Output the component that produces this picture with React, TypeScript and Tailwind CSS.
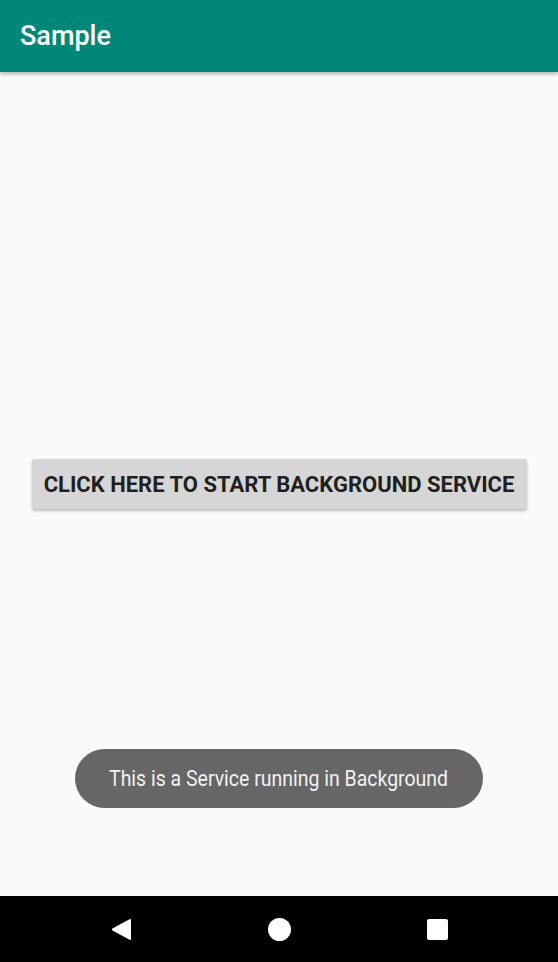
import React from "react";

export default function App() {
  return (
    <div className="flex flex-col w-[558px] h-[962px] bg-[#fafafa] font-['Roboto',sans-serif] overflow-hidden">
      {/* App bar */}
      <div className="h-[72px] shrink-0 bg-[#00877a] flex items-center px-5 shadow-[0_2px_4px_rgba(0,0,0,0.3)] z-10">
        <h1 className="text-[27px] font-medium text-white">Sample</h1>
      </div>

      {/* Content */}
      <div className="relative flex-1 flex items-center justify-center">
        <button className="h-[50px] w-[495px] bg-[#d6d6d6] rounded-[3px] shadow-[0_2px_3px_rgba(0,0,0,0.25)] text-[22px] font-bold text-[#1f1f1f] uppercase">
          Click here to start background service
        </button>

        {/* Toast */}
        <div className="absolute left-[75px] top-[677px] w-[408px] h-[59px] rounded-full bg-[#666666] flex items-center justify-center">
          <span className="text-[22px] text-[#f2f2f2] whitespace-nowrap scale-x-[0.885]">This is a Service running in Background</span>
        </div>
      </div>

      {/* Nav bar */}
      <div className="h-[66px] shrink-0 bg-black flex items-center justify-center gap-[136px]">
        <svg width="21" height="23" viewBox="0 0 21 23">
          <path d="M20 2 L20 21 Q20 22.6 18.6 21.8 L1.4 12.6 Q0.3 11.5 1.4 10.4 L18.6 1.2 Q20 0.4 20 2 Z" fill="white" />
        </svg>
        <div className="w-[23px] h-[23px] rounded-full bg-white" />
        <div className="w-[21px] h-[21px] rounded-[2px] bg-white" />
      </div>
    </div>
  );
}
